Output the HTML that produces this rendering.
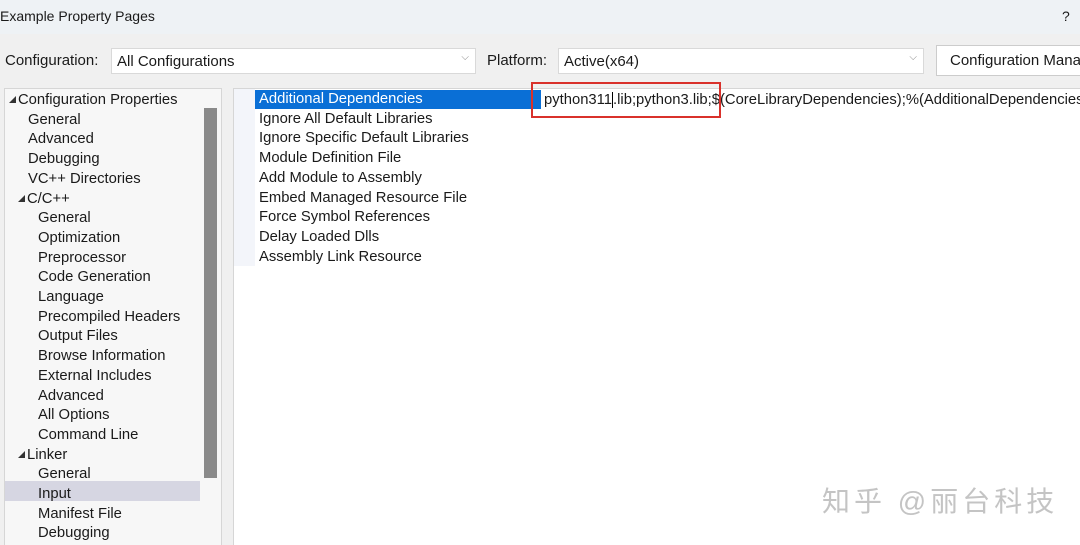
<!DOCTYPE html>
<html><head><meta charset="utf-8"><style>
*{margin:0;padding:0;box-sizing:border-box}
html,body{width:1080px;height:545px;overflow:hidden}
body{background:#f0f0f0;font-family:"Liberation Sans","Noto Sans CJK SC",sans-serif;font-size:14.8px;color:#1a1a1a;position:relative}
.a{position:absolute;white-space:nowrap}
.title{left:0;top:0;width:1080px;height:34px;background:#eef2f5}
.box{background:#fff;border:1px solid #d9d9d9}
.tri{display:inline-block;width:0;height:0;border-left:7px solid transparent;border-bottom:7px solid #333;margin-right:2px;vertical-align:1px}
</style></head><body>
<div class="a title"></div>
<div class="a" style="left:0;top:8px;font-size:14px">Example Property Pages</div>
<div class="a" style="left:1062px;top:8px;font-size:14px">?</div>
<div class="a" style="left:5px;top:52px;font-size:15px">Configuration:</div>
<div class="a box" style="left:111px;top:48px;width:365px;height:26px;padding:4px 5px;font-size:15px">All Configurations<span style="position:absolute;right:6px;top:3px;font-size:10px;color:#888">⌵</span></div>
<div class="a" style="left:487px;top:52px;font-size:15px">Platform:</div>
<div class="a box" style="left:558px;top:48px;width:366px;height:26px;padding:4px 5px;font-size:15px">Active(x64)<span style="position:absolute;right:6px;top:3px;font-size:10px;color:#888">⌵</span></div>
<div class="a box" style="left:936px;top:45px;width:160px;height:31px;padding:6px 13px;font-size:15px;border-color:#ccc">Configuration Manager...</div>
<!-- left tree -->
<div class="a" style="left:4px;top:88px;width:218px;height:470px;background:#f7f7f7;border:1px solid #d6d6d6"></div>
<div class="a" style="left:204px;top:108px;width:13px;height:370px;background:#8a8a8a"></div>
<div class="a" style="left:5px;top:481px;width:195px;height:20px;background:#d6d6e2"></div>
<div class="a" style="left:9px;top:91px;line-height:19.7px">
<div><span class="tri"></span>Configuration Properties</div>
<div style="padding-left:19px">General<br>Advanced<br>Debugging<br>VC++ Directories</div>
<div style="padding-left:9px"><span class="tri"></span>C/C++</div>
<div style="padding-left:29px">General<br>Optimization<br>Preprocessor<br>Code Generation<br>Language<br>Precompiled Headers<br>Output Files<br>Browse Information<br>External Includes<br>Advanced<br>All Options<br>Command Line</div>
<div style="padding-left:9px"><span class="tri"></span>Linker</div>
<div style="padding-left:29px">General<br>Input<br>Manifest File<br>Debugging<br>System</div>
</div>
<!-- right panel -->
<div class="a" style="left:233px;top:88px;width:860px;height:470px;background:#fff;border:1px solid #d6d6d6"></div>
<div class="a" style="left:234px;top:89px;width:21px;height:177px;background:#f3f5fa"></div>
<div class="a" style="left:255px;top:90px;width:286px;height:19px;background:#0a6fd6"></div>
<div class="a" style="left:259px;top:90px;line-height:19.7px">
<div style="color:#fff">Additional Dependencies</div>
<div>Ignore All Default Libraries</div><div>Ignore Specific Default Libraries</div><div>Module Definition File</div><div>Add Module to Assembly</div><div>Embed Managed Resource File</div><div>Force Symbol References</div><div>Delay Loaded Dlls</div><div>Assembly Link Resource</div>
</div>
<div class="a" style="left:544px;top:90px;line-height:20px">python311<span style="border-left:1px solid #000"></span>.lib;python3.lib;$(CoreLibraryDependencies);%(AdditionalDependencies)</div>
<div class="a" style="left:531px;top:82px;width:190px;height:36px;border:2px solid #d9312b"></div>
<div class="a" style="left:822px;top:480px;font-size:28px;color:#c4c4c4;letter-spacing:4px">知乎 @丽台科技</div>
</body></html>
